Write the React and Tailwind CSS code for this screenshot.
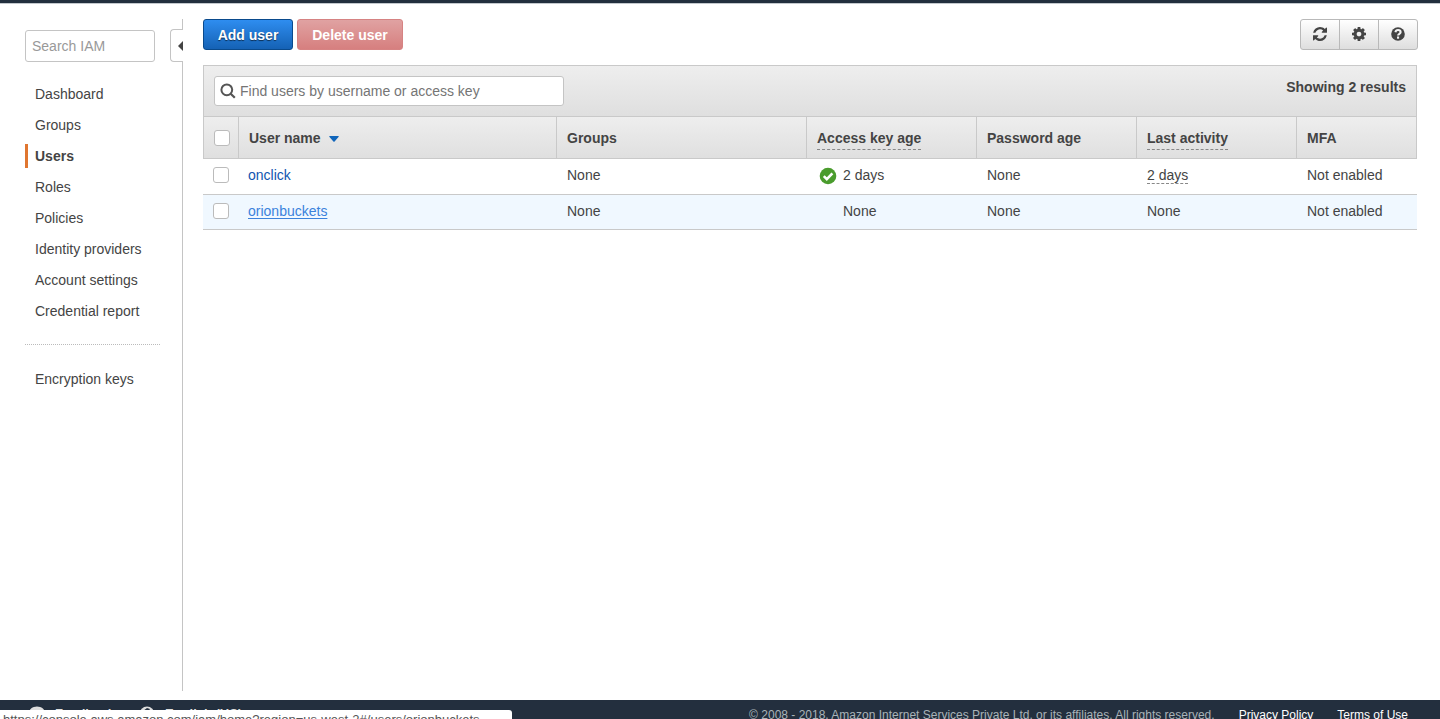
import React from "react";

const NAV = [
  "Dashboard",
  "Groups",
  "Users",
  "Roles",
  "Policies",
  "Identity providers",
  "Account settings",
  "Credential report",
];

const USERS = [
  { name: "onclick", keyAge: "2 days", keyOk: true, activity: "2 days", hovered: false },
  { name: "orionbuckets", keyAge: "None", keyOk: false, activity: "None", hovered: true },
];

function RefreshIcon() {
  return (
    <svg viewBox="0 0 1536 1536" className="size-[14px]" fill="currentColor" aria-hidden="true">
      <path d="M1511 928q0 5-1 7-64 268-268 434.5t-478 166.5q-146 0-282.5-55t-243.5-157l-129 129q-19 19-45 19t-45-19-19-45v-448q0-26 19-45t45-19h448q26 0 45 19t19 45-19 45l-137 137q71 66 161 102t187 36q134 0 250-65t186-179q11-17 53-117 8-23 30-23h192q13 0 22.5 9.5t9.5 22.5zm25-800v448q0 26-19 45t-45 19h-448q-26 0-45-19t-19-45 19-45l138-138q-148-137-349-137-134 0-250 65t-186 179q-11 17-53 117-8 23-30 23h-199q-13 0-22.5-9.5t-9.5-22.5v-7q65-268 270-434.5t480-166.5q146 0 284 55.5t245 156.5l130-129q19-19 45-19t45 19 19 45z" />
    </svg>
  );
}

function GearIcon() {
  return (
    <svg viewBox="0 0 1536 1536" className="size-[14px]" fill="currentColor" aria-hidden="true">
      <path d="M1024 768q0-106-75-181t-181-75-181 75-75 181 75 181 181 75 181-75 75-181zm512-109v222q0 12-8 23t-20 13l-185 28q-19 54-39 91 35 50 107 138 10 12 10 25t-9 23q-27 37-99 108t-94 71q-12 0-26-9l-138-108q-44 23-91 38-16 136-29 186-7 28-36 28h-222q-14 0-24.5-8.5t-11.5-21.5l-28-184q-49-16-90-37l-141 107q-10 9-25 9-14 0-25-11-126-114-165-168-7-10-7-23 0-12 8-23 15-21 51-66.5t54-70.5q-27-50-41-99l-183-27q-13-2-21-12.5t-8-23.5v-222q0-12 8-23t19-13l186-28q14-46 39-92-40-57-107-138-10-12-10-24 0-10 9-23 26-36 98.5-107.5t94.5-71.5q13 0 26 10l138 107q44-23 91-38 16-136 29-186 7-28 36-28h222q14 0 24.5 8.5t11.5 21.5l28 184q49 16 90 37l142-107q9-9 24-9 13 0 25 10 129 119 165 170 7 8 7 22 0 12-8 23-15 21-51 66.5t-54 70.5q26 50 41 98l183 28q13 2 21 12.5t8 23.5z" />
    </svg>
  );
}

function HelpIcon() {
  return (
    <svg viewBox="0 0 28 28" className="size-[14px]" aria-hidden="true">
      <circle cx="14" cy="14" r="13.6" fill="#444" />
      <path d="M8.8 10.4C9.4 7.2 11.4 6 14.1 6C17 6 19.2 7.8 19.2 10.4C19.2 13.8 14.2 13.4 14.2 17.2" fill="none" stroke="#f3f3f3" strokeWidth="4.2" />
      <rect x="12" y="19" width="4.2" height="4.4" fill="#f3f3f3" />
    </svg>
  );
}

function CheckBox({ label }) {
  return (
    <input
      type="checkbox"
      aria-label={label}
      className="block size-4 appearance-none rounded-[3px] border border-[#bbb] bg-white checked:bg-[#146eb4]"
    />
  );
}

const iconBtn = "flex h-[31px] w-10 items-center justify-center border border-[#b9b9b9] bg-linear-to-b from-white to-[#dedede] pb-[2px]";
const th = "h-[42px] border-r border-b border-[#c9c9c9] px-[10px] text-left font-bold";
const td = "border-b border-[#c9c9c9] px-[10px] pt-[6px] align-top";

function Sidebar() {
  return (
    <div className="flex w-[183px] shrink-0 pb-[9px]">
      <nav className="w-[170px] pt-[26px] pl-[25px]">
        <input
          type="text"
          aria-label="Search IAM"
          placeholder="Search IAM"
          className="block h-8 w-[130px] rounded-[3px] border border-[#c4c4c4] bg-white px-[6px] placeholder:text-[#999]"
        />
        <ul className="mt-5 flex flex-col gap-[7px]">
          {NAV.map((item) => (
            <li key={item}>
              <a
                href="#"
                className={
                  item === "Users"
                    ? "block h-6 border-l-3 border-[#e07630] pl-[7px] leading-6 font-bold"
                    : "block h-6 pl-[10px] leading-6"
                }
              >
                {item}
              </a>
            </li>
          ))}
        </ul>
        <div className="mt-[21px] w-[135px] border-t border-dotted border-[#bbb]" />
        <a href="#" className="mt-[22px] block h-6 pl-[10px] leading-6">
          Encryption keys
        </a>
      </nav>
      <div className="flex w-[13px] flex-col pt-[15px]">
        <div className="h-[10px] border-r border-[#c4c4c4]" />
        <button
          type="button"
          aria-label="Collapse navigation"
          className="flex h-[33px] items-center justify-end rounded-l-[4px] border border-r-0 border-[#c4c4c4]"
        >
          <svg viewBox="0 0 5 10" className="h-[10px] w-[5px]" fill="#444" aria-hidden="true">
            <path d="M0 5L5 0V10Z" />
          </svg>
        </button>
        <div className="grow border-r border-[#c4c4c4]" />
      </div>
    </div>
  );
}

function UsersTable() {
  return (
    <table className="w-full table-fixed border-separate border-spacing-0">
      <colgroup>
        <col className="w-9" />
        <col />
        <col className="w-[250px]" />
        <col className="w-[170px]" />
        <col className="w-[160px]" />
        <col className="w-[160px]" />
        <col className="w-[120px]" />
      </colgroup>
      <thead className="bg-linear-to-b from-[#eeeeee] to-[#dfdfdf]">
        <tr>
          <th className="h-[42px] border-x border-b border-[#c9c9c9] pl-[10px]">
            <CheckBox label="Select all users" />
          </th>
          <th className={th}>
            <button type="button" className="flex items-center gap-2 font-bold">
              User name
              <svg viewBox="0 0 10 6" className="mt-[2px] h-[6px] w-[10px]" fill="#1166bb" aria-hidden="true">
                <path d="M0.5 0H9.5Q10 0.5 9.5 1L5.6 5.4Q5 6 4.4 5.4L0.5 1Q0 0.5 0.5 0Z" />
              </svg>
            </button>
          </th>
          <th className={th}>Groups</th>
          <th className={th}>
            <span className="border-b border-dashed border-[#888] pb-[3px]">Access key age</span>
          </th>
          <th className={th}>Password age</th>
          <th className={th}>
            <span className="border-b border-dashed border-[#888] pb-[3px]">Last activity</span>
          </th>
          <th className={th}>MFA</th>
        </tr>
      </thead>
      <tbody>
        {USERS.map((u) => (
          <tr key={u.name} className={u.hovered ? "h-[35px] bg-[#f0f8ff]" : "h-[36px] bg-white"}>
            <td className="border-b border-[#c9c9c9] pt-2 pl-[10px] align-top">
              <CheckBox label={`Select ${u.name}`} />
            </td>
            <td className="border-b border-[#c9c9c9] px-[9px] pt-[6px] align-top">
              <a href="#" className={u.hovered ? "text-[#3b82dc] underline underline-offset-2" : "text-[#1155b0]"}>
                {u.name}
              </a>
            </td>
            <td className={td}>None</td>
            <td className={td}>
              <div className="flex items-center">
                <span className="flex w-[26px] pt-[2px] pl-[2px]">
                  {u.keyOk && (
                    <svg viewBox="0 0 18 18" className="size-[18px]" role="img" aria-label="Active">
                      <circle cx="9" cy="9" r="8.3" fill="#4a9c2d" />
                      <path d="M4.8 9.2L7.8 12.2L13.4 6.4" fill="none" stroke="#fff" strokeWidth="2.6" />
                    </svg>
                  )}
                </span>
                {u.keyAge}
              </div>
            </td>
            <td className={td}>None</td>
            <td className={td}>
              <span className={u.keyOk ? "border-b border-dashed border-[#888]" : ""}>{u.activity}</span>
            </td>
            <td className={td}>Not enabled</td>
          </tr>
        ))}
      </tbody>
    </table>
  );
}

export default function App() {
  return (
    <div className="relative flex h-screen flex-col overflow-hidden bg-white font-['Liberation_Sans',Arial,sans-serif] text-[14px] leading-5 text-[#444]">
      <div className="h-1 shrink-0 border-b border-[#c3c8cd] bg-[#232f3e]" />
      <div className="flex min-h-0 grow">
        <Sidebar />
        <main className="min-w-0 grow pt-[15px] pr-[23px] pl-5">
          <div className="-mr-px flex items-start justify-between">
            <div className="flex gap-1">
              <button
                type="button"
                className="h-[31px] w-[90px] rounded-[3px] border border-[#0a4a8c] bg-linear-to-b from-[#2e8df0] to-[#1562b5] font-bold text-white text-shadow-[0_1px_1px_rgba(0,0,0,0.6)]"
              >
                Add user
              </button>
              <button
                type="button"
                className="h-[31px] w-[106px] rounded-[3px] border border-[#d68383] bg-linear-to-b from-[#e0a2a2] to-[#d67f7f] font-bold text-white"
              >
                Delete user
              </button>
            </div>
            <div className="flex -space-x-px">
              <button type="button" aria-label="Refresh" className={`${iconBtn} rounded-l-[3px]`}>
                <RefreshIcon />
              </button>
              <button type="button" aria-label="Settings" className={iconBtn}>
                <GearIcon />
              </button>
              <button type="button" aria-label="Help" className={`${iconBtn} rounded-r-[3px]`}>
                <HelpIcon />
              </button>
            </div>
          </div>
          <div className="mt-[15px] flex h-[52px] items-start justify-between border border-[#c9c9c9] bg-linear-to-b from-[#eeeeee] to-[#dfdfdf] px-[10px] pt-[10px]">
            <label className="flex h-[30px] w-[350px] items-center gap-1 rounded-[3px] border border-[#c4c4c4] bg-white px-[5px]">
              <svg viewBox="0 0 16 16" className="size-4 shrink-0" fill="none" stroke="#555" aria-hidden="true">
                <circle cx="6.8" cy="6.8" r="5.4" strokeWidth="2" />
                <path d="M10.7 10.7L14.8 14.8" strokeWidth="2.2" />
              </svg>
              <input
                type="text"
                aria-label="Find users"
                placeholder="Find users by username or access key"
                className="w-full bg-transparent outline-none placeholder:text-[#757575]"
              />
            </label>
            <span className="leading-[22px] font-bold">Showing 2 results</span>
          </div>
          <UsersTable />
        </main>
      </div>
      <footer className="h-[19px] shrink-0 overflow-hidden bg-[#232f3e]">
        <div className="flex h-[30px] items-center justify-between pr-8 pl-[29px] text-[12px] text-white">
          <div className="flex gap-6 pb-[2px] text-[13px] font-bold text-[#ddd]">
            <a href="#" className="flex items-center gap-[10px]">
              <svg viewBox="0 0 16 16" className="size-4" fill="currentColor" aria-hidden="true">
                <path d="M8 0.5C12.4 0.5 16 3.3 16 7S12.4 13.5 8 13.5L3 16V12C1.2 10.8 0 9 0 7C0 3.3 3.6 0.5 8 0.5Z" />
              </svg>
              Feedback
            </a>
            <a href="#" className="flex items-center gap-[10px]">
              <svg viewBox="0 0 16 16" className="size-4" aria-hidden="true">
                <circle cx="8" cy="8" r="7.5" fill="currentColor" />
                <path d="M8 2L11 3L9 6L6 8L4 5ZM10 8L13 9L11 13L9 11Z" fill="#232f3e" />
              </svg>
              English (US)
            </a>
          </div>
          <div className="flex">
            <span className="text-[#a9b3b8]">
              © 2008 - 2018, Amazon Internet Services Private Ltd. or its affiliates. All rights reserved.
            </span>
            <a href="#" className="ml-6">Privacy Policy</a>
            <a href="#" className="ml-6">Terms of Use</a>
          </div>
        </div>
      </footer>
      <div className="absolute bottom-0 left-0 h-[9px] w-[512px] overflow-hidden rounded-tr-[3px] bg-white pl-[3px] text-[13px] whitespace-nowrap text-[#555]">
        https://console.aws.amazon.com/iam/home?region=us-west-2#/users/orionbuckets
      </div>
    </div>
  );
}
